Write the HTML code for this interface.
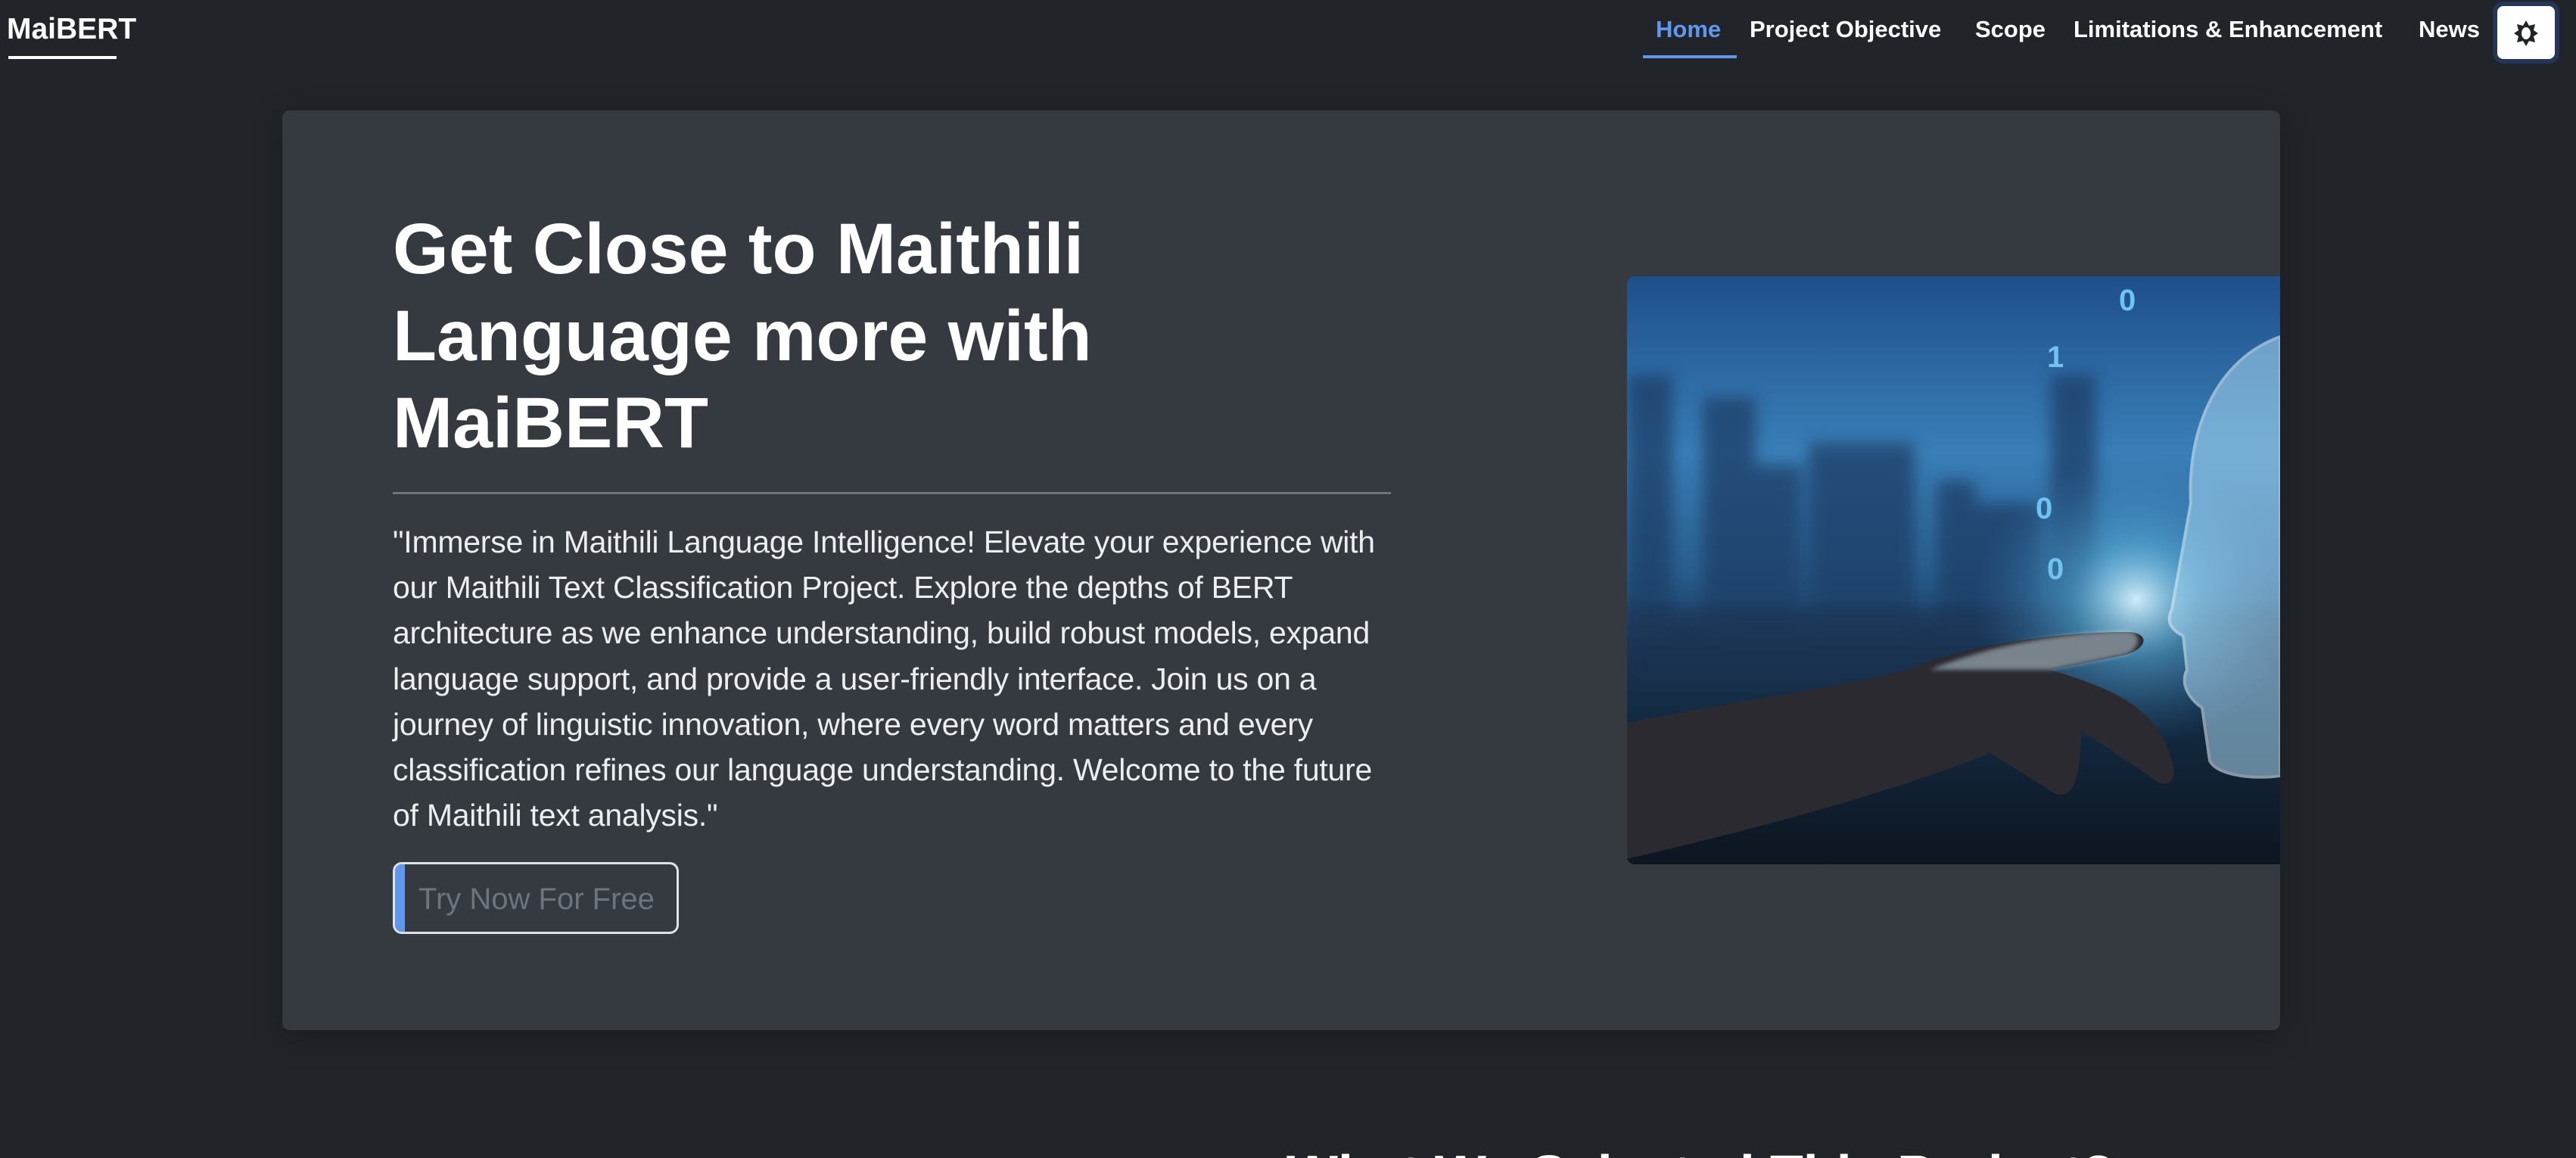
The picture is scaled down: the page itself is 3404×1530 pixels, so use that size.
<!DOCTYPE html>
<html><head><meta charset="utf-8"><style>
*{margin:0;padding:0;box-sizing:border-box}
html,body{width:3404px;height:1530px;overflow:hidden;background:#212529;font-family:"Liberation Sans",Arial,sans-serif;color:#fff}
.wrap{position:relative;width:3404px;height:1530px;overflow:hidden}
.abs{position:absolute}
.brand{left:9px;top:14px;font-size:39px;font-weight:bold;line-height:50px}
.brandline{left:11px;top:74px;width:143px;height:4px;background:#fff}
.nav{top:18px;font-size:31px;font-weight:bold;line-height:42px;white-space:nowrap}
.homeline{left:2171px;top:73px;width:124px;height:4px;background:#5f97ee}
.tbtn{left:3294px;top:2px;width:88px;height:82px;border-radius:14px;background:#25355a}
.tbtn i{position:absolute;left:6px;top:6px;width:76px;height:70px;border-radius:8px;background:#fff}
.card{left:373px;top:146px;width:2640px;height:1215px;background:#343a40;border-radius:10px;box-shadow:0 10px 40px rgba(0,0,0,.25);overflow:hidden}
h1{position:absolute;left:519px;top:272px;font-size:95px;line-height:115px;font-weight:bold;white-space:nowrap}
.hr{left:519px;top:650px;width:1319px;height:3px;background:#6c757d}
.p{left:519px;top:686px;font-size:41px;line-height:60.2px;color:#eceef0;white-space:nowrap;letter-spacing:-0.25px}
.btn{left:519px;top:1139px;width:378px;height:95px;border:3px solid #dee2e6;border-radius:12px;overflow:hidden}
.btn b{position:absolute;left:0;top:0;width:13px;height:100%;background:#5f97ee}
.btn span{position:absolute;left:31px;top:24px;font-size:40px;color:#6c757d;line-height:44px;white-space:nowrap}
.img{left:2150px;top:365px;width:863px;height:777px;border-radius:10px 0 0 10px;overflow:hidden}
.h2{left:1700px;top:1513px;font-size:72px;font-weight:bold;white-space:nowrap;line-height:80px}
</style></head><body><div class="wrap">
<div class="abs brand">MaiBERT</div>
<div class="abs brandline"></div>
<div class="abs nav" style="left:2188px;color:#5f97ee">Home</div>
<div class="abs nav" style="left:2312px">Project Objective</div>
<div class="abs nav" style="left:2610px">Scope</div>
<div class="abs nav" style="left:2740px">Limitations &amp; Enhancement</div>
<div class="abs nav" style="left:3196px">News</div>
<div class="abs homeline"></div>
<div class="abs tbtn"><i></i>
<svg class="abs" style="left:27px;top:23px" width="34" height="38" viewBox="0 0 34 38"><g fill="#212529"><polygon points="17,2 21,9 29,7 27,15 33,19 27,23 29,31 21,29 17,36 13,29 5,31 7,23 1,19 7,15 5,7 13,9"/></g><ellipse cx="17" cy="19" rx="6" ry="8" fill="#fff"/></svg></div>

<div class="abs card"></div>
<h1>Get Close to Maithili<br>Language more with<br>MaiBERT</h1>
<div class="abs hr"></div>
<div class="abs p">"Immerse in Maithili Language Intelligence! Elevate your experience with<br>our Maithili Text Classification Project. Explore the depths of BERT<br>architecture as we enhance understanding, build robust models, expand<br>language support, and provide a user-friendly interface. Join us on a<br>journey of linguistic innovation, where every word matters and every<br>classification refines our language understanding. Welcome to the future<br>of Maithili text analysis."</div>
<div class="abs btn"><b></b><span>Try Now For Free</span></div>

<div class="abs img">
<svg width="863" height="777" viewBox="0 0 863 777">
<defs>
<linearGradient id="sky" x1="0" y1="0" x2="0" y2="1">
<stop offset="0" stop-color="#1e4f8a"/><stop offset=".3" stop-color="#3a7fb8"/><stop offset=".5" stop-color="#2a5f8f"/><stop offset=".65" stop-color="#16324f"/><stop offset="1" stop-color="#0d1520"/></linearGradient>
<radialGradient id="glow" cx=".78" cy=".55" r=".25"><stop offset="0" stop-color="#d8f4ff" stop-opacity=".95"/><stop offset=".4" stop-color="#5fc0ec" stop-opacity=".5"/><stop offset="1" stop-color="#3a7fb8" stop-opacity="0"/></radialGradient>
<filter id="bl"><feGaussianBlur stdDeviation="10"/></filter>
<filter id="bl2"><feGaussianBlur stdDeviation="3"/></filter>
</defs>
<rect width="863" height="777" fill="url(#sky)"/>
<g fill="#1b3d66" opacity=".75" filter="url(#bl)">
<rect x="0" y="130" width="60" height="340"/><rect x="100" y="160" width="70" height="310"/><rect x="140" y="250" width="90" height="230"/><rect x="240" y="220" width="140" height="250"/><rect x="410" y="270" width="50" height="200"/><rect x="460" y="300" width="90" height="170"/><rect x="560" y="130" width="60" height="320"/>
</g>
<rect x="0" y="440" width="863" height="100" fill="#1a3350" opacity=".6" filter="url(#bl)"/>
<rect width="863" height="777" fill="url(#glow)"/>
<path d="M0 590 C150 560 300 540 370 520 C440 490 560 470 660 470 C690 470 690 490 660 500 L560 520 C620 540 700 560 720 640 C730 670 710 680 690 660 L600 600 C600 660 590 700 560 680 L480 630 C430 650 300 700 0 770 Z" fill="#2a2a30"/>
<path d="M400 520 C500 480 600 470 660 468 C680 470 680 490 660 500 L560 520" fill="#c8dbe6" opacity=".5" filter="url(#bl2)"/>
<path d="M863 80 C780 110 740 200 745 300 L720 440 C710 460 725 470 735 475 L740 520 C730 540 745 560 760 570 L770 640 C780 660 830 665 863 660 Z" fill="#a8d6f0" opacity=".55" stroke="#e8f8ff" stroke-width="4"/>
<g fill="#6ec3f0" font-family="Liberation Sans" font-weight="bold" font-size="40"><text x="650" y="45">0</text><text x="555" y="120">1</text><text x="540" y="320">0</text><text x="555" y="400">0</text></g>
</svg></div>

<div class="abs h2">What We Selected This Project?</div>
</div></body></html>
